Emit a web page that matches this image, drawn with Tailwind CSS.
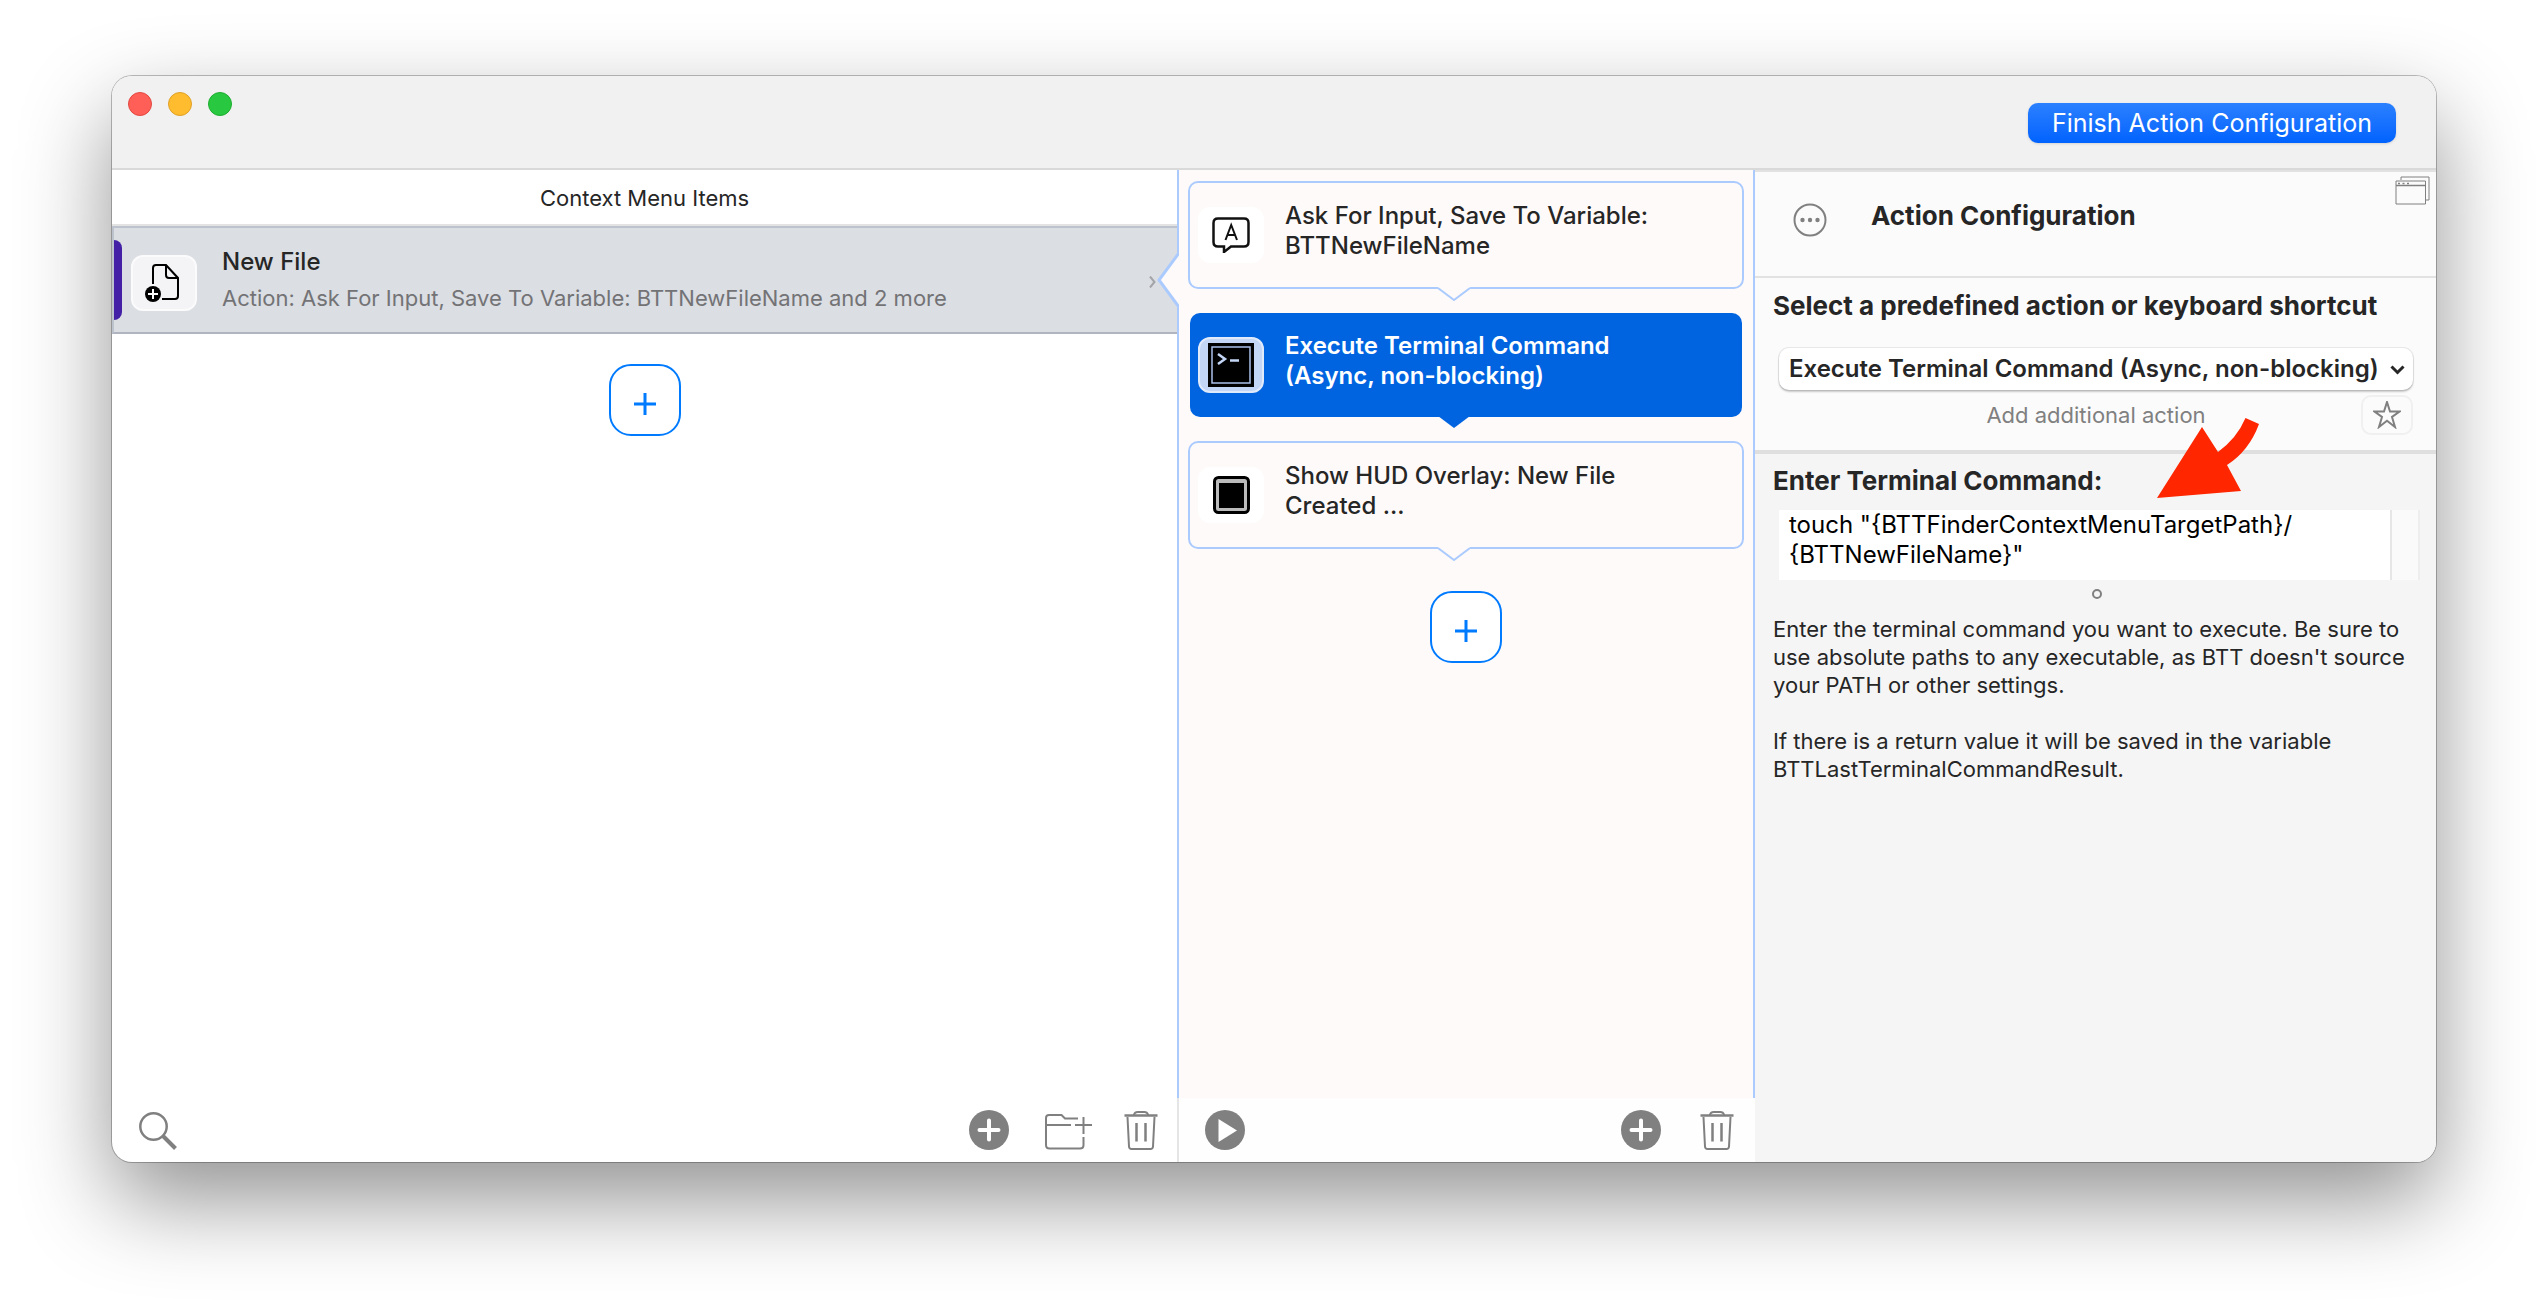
<!DOCTYPE html>
<html lang="en">
<head>
<meta charset="utf-8">
<title>Action Configuration</title>
<script src="https://cdn.jsdelivr.net/npm/@tailwindcss/browser@4"></script>
</head>
<body class="flex min-h-screen flex-col bg-white px-28 pt-19 pb-37 font-['Inter',sans-serif] text-[#262626]">
<svg class="hidden" aria-hidden="true">
  <symbol id="trash" viewBox="0 0 34 40"><g fill="none" stroke="#808080" stroke-width="2"><path d="M0.500 5.500H33.500" stroke-width="2.500"/><path d="M10 5V4.500Q11 2 13.500 2H20.500Q23 2 24 4.500V5"/><path d="M3.500 7L5 36.500Q5.200 39 7.500 39H26.500Q28.800 39 29 36.500L30.500 7"/><path d="M12.500 13V31.500M21.500 13V31.500" stroke-width="2.500"/></g></symbol>
  <symbol id="add" viewBox="0 0 40 40"><circle cx="20" cy="20" r="20" fill="#808080"/><path d="M20 10.500V29.500M10.500 20H29.500" stroke="#fff" stroke-width="4" stroke-linecap="round"/></symbol>
  <symbol id="plus" viewBox="0 0 22 22"><path d="M11 0V22M0 11H22" stroke="#007aff" stroke-width="3"/></symbol>
  <symbol id="tail" viewBox="0 0 32 14"><path d="M0 0H32V2L16 13L0 2Z" fill="#fefaf9"/><path d="M0 1L16 13L32 1" fill="none" stroke="#abcbff" stroke-width="2"/></symbol>
</svg>
<main class="flex grow flex-col overflow-hidden rounded-[20px] bg-white shadow-[0_0_0_1px_rgba(0,0,0,0.25),0_38px_90px_rgba(0,0,0,0.43)]">
  <header class="flex h-[94px] shrink-0 items-start justify-between border-b-2 border-[#d9d9d9] bg-[#f1f1f1] pr-10 pl-4">
    <div class="flex gap-4 pt-4">
      <button aria-label="Close" class="size-6 rounded-full border border-[#e2483f] bg-[#ff5f57]"></button>
      <button aria-label="Minimize" class="size-6 rounded-full border border-[#e0a028] bg-[#febc2e]"></button>
      <button aria-label="Zoom" class="size-6 rounded-full border border-[#1fad30] bg-[#28c840]"></button>
    </div>
    <button class="mt-[27px] h-10 w-[368px] rounded-[10px] bg-linear-to-b from-[#2a80ff] to-[#0062ff] pb-px text-[25px] leading-9 whitespace-nowrap text-white shadow-sm">Finish Action Configuration</button>
  </header>

  <div class="grid grow grid-cols-[1067fr_576fr_681fr]">
    <section class="flex flex-col">
      <div class="flex grow flex-col border-r-2 border-[#abcbff]">
        <h2 class="h-14 border-b-2 border-[#e3e3e3] text-center text-[22px] leading-[56px]">Context Menu Items</h2>
        <div class="relative flex h-27 items-start border-y-2 border-l-2 border-t-[#bcc3cd] border-b-[#b0b4be] border-l-[#bcc3cd] bg-[#dbdee3]">
          <span class="mt-3 h-20 w-2 rounded-r-lg bg-[#4320a5]"></span>
          <span class="mt-[27px] ml-[9px] flex h-14 w-[66px] items-center justify-center rounded-xl border-2 border-[#fbfbfc] bg-[#f4f4f7] pr-1">
            <svg class="h-[38px] w-9" viewBox="0 0 36 38" fill="none" stroke="#000" stroke-width="2"><path d="M9 20V4Q9 1 12 1H22L34 14V32Q34 35 31 35H18"/><path d="M22 1V11Q22 14 25 14H34"/><circle cx="9" cy="30" r="8" fill="#000" stroke="none"/><path d="M9 25V35M4 30H14" stroke="#fff"/></svg>
          </span>
          <div class="ml-[25px] grow pt-4">
            <h3 class="text-[24px] leading-9 font-medium">New File</h3>
            <p class="text-[22px] leading-9 text-[#737376]">Action: Ask For Input, Save To Variable: BTTNewFileName and 2 more</p>
          </div>
          <svg class="mt-12 mr-[21px] h-3 w-[7px]" viewBox="0 0 7 12" fill="none" stroke="#a3a4a8" stroke-width="2"><path d="M1 0.500L5.500 6L1 11.500"/></svg>
          <svg class="absolute top-6 -right-[2px] h-14 w-[22px]" viewBox="0 0 22 56"><path d="M22 1L2 28L22 55Z" fill="#fefaf9"/><path d="M22 1L2 28L22 55" fill="none" stroke="#abcbff" stroke-width="3"/></svg>
        </div>
        <button aria-label="Add menu item" class="mt-[30px] flex size-18 items-center justify-center self-center rounded-[22px] border-2 border-[#007aff] bg-white pt-2"><svg class="size-[22px]"><use href="#plus"/></svg></button>
      </div>
      <footer class="flex h-16 items-start gap-9 border-r-2 border-[#e5e5e5] pt-3 pr-[19px] pl-[27px]">
        <button aria-label="Search" class="mt-[2px]"><svg class="size-[38px]" viewBox="0 0 38 38" fill="none" stroke="#808080"><circle cx="14.500" cy="14.500" r="13.200" stroke-width="2.500"/><path d="M24 24L36.500 36.500" stroke-width="4"/></svg></button>
        <button aria-label="Add" class="ml-auto"><svg class="size-10"><use href="#add"/></svg></button>
        <button aria-label="New folder"><svg class="mt-1 h-9 w-[47px]" viewBox="0 0 47 36" fill="none" stroke="#808080" stroke-width="2"><path d="M33 4.500H20L16.500 1H4Q1 1 1 4V31Q1 34.500 4.500 34.500H35Q38.500 34.500 38.500 31V23"/><path d="M1 11H26M30 11H47M38.500 3V20"/></svg></button>
        <button aria-label="Delete" class="-ml-1"><svg class="h-10 w-[34px]"><use href="#trash"/></svg></button>
      </footer>
    </section>

    <section class="flex flex-col">
      <div class="flex grow flex-col border-r-2 border-[#abcbff] bg-[#fefaf9] px-[9px] pt-[11px]">
        <article class="relative mb-[22px] flex h-27 rounded-[10px] border-2 border-[#abcbff] pl-2">
          <span class="mt-6 flex h-14 w-[66px] shrink-0 items-center justify-center rounded-xl bg-white">
            <svg class="h-9 w-[38px]" viewBox="0 0 38 36" fill="none" stroke="#111" stroke-width="2"><path d="M6 1.500H32Q36.500 1.500 36.500 6V25Q36.500 29.500 32 29.500H19L12 35V29.500H6Q1.500 29.500 1.500 25V6Q1.500 1.500 6 1.500Z" stroke-width="2.500"/><path d="M13.500 23L19.200 8L25 23M15.500 18H23"/></svg>
          </span>
          <h3 class="ml-[21px] pt-[18px] text-[24px] leading-[30px] font-medium whitespace-nowrap">Ask For Input, Save To Variable:<br>BTTNewFileName</h3>
          <svg class="absolute top-[104px] left-1/2 h-[14px] w-8 -translate-x-7"><use href="#tail"/></svg>
        </article>
        <article class="relative mb-[22px] flex h-27 text-white">
          <div class="mx-[2px] my-[2px] flex grow rounded-[10px] bg-[#0064e1] pl-2">
            <span class="mt-6 flex h-14 w-[66px] shrink-0 items-center justify-center rounded-xl border-2 border-[#e0eafb] bg-[#c3d6f6]">
              <svg class="h-11 w-[46px]" viewBox="0 0 46 44"><path d="M0 0H46V44H0Z" fill="#000"/><path d="M4 4H42V40H4Z" fill="none" stroke="#a9c0ea" stroke-width="1.500"/><path d="M10 11L17 16L10 21M22 17.500H31" fill="none" stroke="#c3d6f6" stroke-width="2.500"/></svg>
            </span>
            <h3 class="ml-[21px] pt-[18px] text-[24px] leading-[30px] font-semibold whitespace-nowrap">Execute Terminal Command<br>(Async, non-blocking)</h3>
          </div>
          <svg class="absolute top-[105px] left-1/2 h-[13px] w-8 -translate-x-7" viewBox="0 0 32 13"><path d="M0 0H32L16 12Z" fill="#0064e1"/></svg>
        </article>
        <article class="relative flex h-27 rounded-[10px] border-2 border-[#abcbff] pl-2">
          <span class="mt-6 flex h-14 w-[66px] shrink-0 items-center justify-center rounded-xl bg-white">
            <svg class="h-[38px] w-[37px]" viewBox="0 0 37 38"><rect x="1.500" y="1.500" width="34" height="35" rx="4" fill="#bbb" stroke="#000" stroke-width="3"/><rect x="6" y="7" width="25" height="25" fill="#000"/></svg>
          </span>
          <h3 class="ml-[21px] pt-[18px] text-[24px] leading-[30px] font-medium whitespace-nowrap">Show HUD Overlay: New File<br>Created ...</h3>
          <svg class="absolute top-[104px] left-1/2 h-[14px] w-8 -translate-x-7"><use href="#tail"/></svg>
        </article>
        <button aria-label="Add action" class="mt-[42px] flex size-18 items-center justify-center self-center rounded-[22px] border-2 border-[#007aff] bg-white pt-2"><svg class="size-[22px]"><use href="#plus"/></svg></button>
      </div>
      <footer class="flex h-16 items-start gap-[39px] bg-[#fefefe] pt-3 pr-[21px] pl-[26px]">
        <button aria-label="Run"><svg class="size-10" viewBox="0 0 40 40"><circle cx="20" cy="20" r="20" fill="#808080"/><path d="M13.500 9L32 20.500L13.500 32Z" fill="#fff"/></svg></button>
        <button aria-label="Add" class="ml-auto"><svg class="size-10"><use href="#add"/></svg></button>
        <button aria-label="Delete"><svg class="h-10 w-[34px]"><use href="#trash"/></svg></button>
      </footer>
    </section>

    <section class="flex flex-col bg-[#f5f5f5]">
      <div class="flex h-27 items-start border-t-2 border-b-2 border-[#e2e2e2] bg-[#fbfbfb] pr-[6px] pl-[38px]">
        <button aria-label="More" class="mt-[31px]"><svg class="size-[34px]" viewBox="0 0 34 34"><circle cx="17" cy="17" r="15.500" fill="none" stroke="#808080" stroke-width="2"/><g fill="#808080"><circle cx="9.500" cy="17" r="2.200"/><circle cx="17" cy="17" r="2.200"/><circle cx="24.500" cy="17" r="2.200"/></g></svg></button>
        <h2 class="mt-[26px] ml-11 text-[26px] leading-9 font-bold">Action Configuration</h2>
        <button aria-label="Open in window" class="mt-1 ml-auto"><svg class="h-[29px] w-[35px]" viewBox="0 0 35 29" fill="none" stroke="#808080"><path d="M6 4V1H34V24H31"/><path d="M1 5H30.500V28H1Z"/><path d="M1 9.500H30" stroke-width="1.500"/><path d="M3 7.500H14" stroke-width="1.500" stroke-dasharray="2 2.500"/></svg></button>
      </div>
      <div class="flex h-44 flex-col border-b-4 border-[#dfdfdf] bg-[#fbfbfb] pt-[10px] pr-[23px] pl-[18px]">
        <label for="action" class="text-[26px] leading-9 font-bold whitespace-nowrap">Select a predefined action or keyboard shortcut</label>
        <div class="relative mt-6 ml-[6px]">
          <select id="action" class="block h-[42px] w-full appearance-none rounded-[10px] bg-white pl-[10px] text-[24px] font-semibold shadow-[0_0_0_1px_rgba(0,0,0,0.08),0_2px_2px_rgba(0,0,0,0.2)]"><option>Execute Terminal Command (Async, non-blocking)</option></select>
          <svg class="pointer-events-none absolute top-[17px] right-2 h-[10px] w-[15px]" viewBox="0 0 15 10" fill="none" stroke="#262626" stroke-width="3"><path d="M1.500 1.500L7.500 7.500L13.500 1.500"/></svg>
        </div>
        <div class="mt-[5px] ml-[6px] flex items-center">
          <button class="ml-[52px] grow text-[22px] leading-10 text-[#808080]">Add additional action</button>
          <button aria-label="Favorite" class="flex h-10 w-[52px] items-center justify-center rounded-[10px] border-2 border-[#f0f0f0]"><svg class="size-7" viewBox="0 0 28 28" fill="none" stroke="#808080" stroke-width="2"><path d="M14 1L17 10.500H26.500L19 16L22 26L14 19.800L6 26L9 16L1.500 10.500H11Z"/></svg></button>
        </div>
      </div>
      <div class="relative flex flex-col pt-[9px] pr-4 pl-[18px]">
        <label for="command" class="text-[26px] leading-9 font-bold">Enter Terminal Command:</label>
        <div class="mt-[11px] ml-[6px] flex h-[70px] border-r-2 border-[#eeeeee] bg-[#fafafa]">
          <textarea id="command" spellcheck="false" class="h-full grow resize-none overflow-hidden bg-white pl-[10px] text-[24px] leading-[30px] text-black">touch "{BTTFinderContextMenuTargetPath}/
{BTTNewFileName}"</textarea>
          <span class="w-7 border-l-2 border-[#e6e6e6]"></span>
        </div>
        <span class="mt-[9px] size-[10px] self-center rounded-full border-2 border-[#808080]"></span>
        <p class="mt-4 text-[22px] leading-7 whitespace-nowrap">Enter the terminal command you want to execute. Be sure to<br>use absolute paths to any executable, as BTT doesn't source<br>your PATH or other settings.</p>
        <p class="mt-7 text-[22px] leading-7 whitespace-nowrap">If there is a return value it will be saved in the variable<br>BTTLastTerminalCommandResult.</p>
        <svg class="pointer-events-none absolute -top-9 right-[177px] h-20 w-[102px]" viewBox="0 0 102 80"><path d="M0 80L45 9L61 34Q80 20 88.500 0L102 6Q92 33 70 47L84 73Z" fill="#ff2600"/></svg>
      </div>
    </section>
  </div>
</main>
</body>
</html>
